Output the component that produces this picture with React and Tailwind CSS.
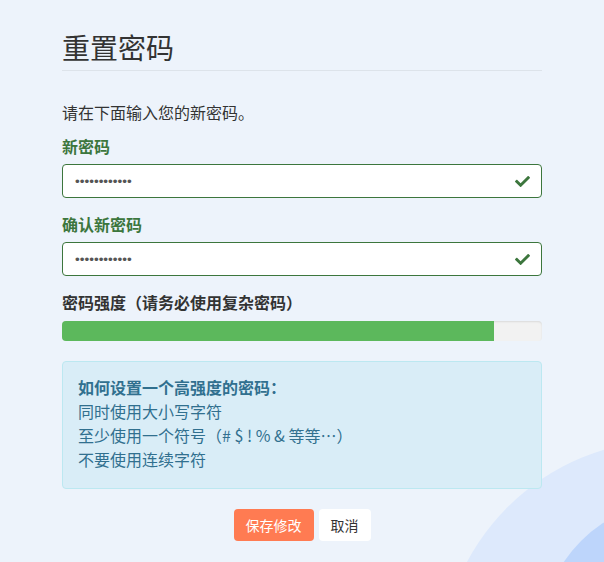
import { FaCheck } from 'react-icons/fa';

const TIPS = ['同时使用大小写字符', '至少使用一个符号（# $ ! % & 等等…）', '不要使用连续字符'];

function PasswordField({ label }) {
  return (
    <div className="mb-[15px]">
      <label className="block text-[16px] font-bold leading-[22px] text-[#3c763d] mb-[7px]">
        {label}
      </label>
      <div className="relative">
        <input
          type="password"
          readOnly
          value="************"
          className="w-full h-[34px] pl-[12px] pr-[40px] font-['Liberation_Sans',sans-serif] text-[13.5px] text-[#555] bg-white border border-[#3c763d] rounded-[4px] outline-none"
        />
        <FaCheck className="absolute right-[12px] top-[10px] w-[15px] h-[15px] text-[#3c763d]" />
      </div>
    </div>
  );
}

export default function App() {
  return (
    <div className="relative min-h-[562px] overflow-hidden bg-[#edf3fb] font-['Noto_Sans_CJK_SC','Noto_Sans',sans-serif] text-[#333]">
      {/* background decoration */}
      <div className="absolute left-[440px] top-[440px] w-[460px] h-[460px] rounded-full bg-[#dde9fc]" />
      <div className="absolute left-[540px] top-[500px] w-[280px] h-[280px] rounded-full bg-[#bdd5fb]" />

      <div className="relative w-[480px] ml-[62px] pt-[27px]">
        <h1 className="text-[28px] leading-[40px] font-normal text-[#333] pb-[3px] border-b border-[#dde3ea]">
          重置密码
        </h1>
        <p className="mt-[30px] mb-[12px] text-[16px] leading-[22px]">请在下面输入您的新密码。</p>

        <PasswordField label="新密码" />
        <PasswordField label="确认新密码" />

        <div className="text-[16px] font-bold leading-[22px] mb-[8px] text-[#333]">
          密码强度（请务必使用复杂密码）
        </div>
        <div className="h-[20px] rounded-[4px] bg-[#f2f2f2] shadow-[inset_0_1px_2px_rgba(0,0,0,0.1)] overflow-hidden">
          <div className="h-full bg-[#5cb85c]" style={{ width: '90%' }} />
        </div>

        <div className="mt-[20px] px-[15px] pt-[13px] pb-[17px] bg-[#d9edf7] border border-[#bce8f1] rounded-[4px] text-[#31708f] text-[16px] leading-[24px]">
          <div className="font-bold">如何设置一个高强度的密码：</div>
          {TIPS.map((t) => (
            <div key={t}>{t}</div>
          ))}
        </div>

        <div className="mt-[20px] flex justify-center gap-[5px]">
          <button className="h-[32px] px-[12px] rounded-[4px] bg-[#ff7b52] text-white text-[14px]">
            保存修改
          </button>
          <button className="h-[32px] px-[12px] rounded-[4px] bg-white text-[#333] text-[14px]">
            取消
          </button>
        </div>
      </div>
    </div>
  );
}
